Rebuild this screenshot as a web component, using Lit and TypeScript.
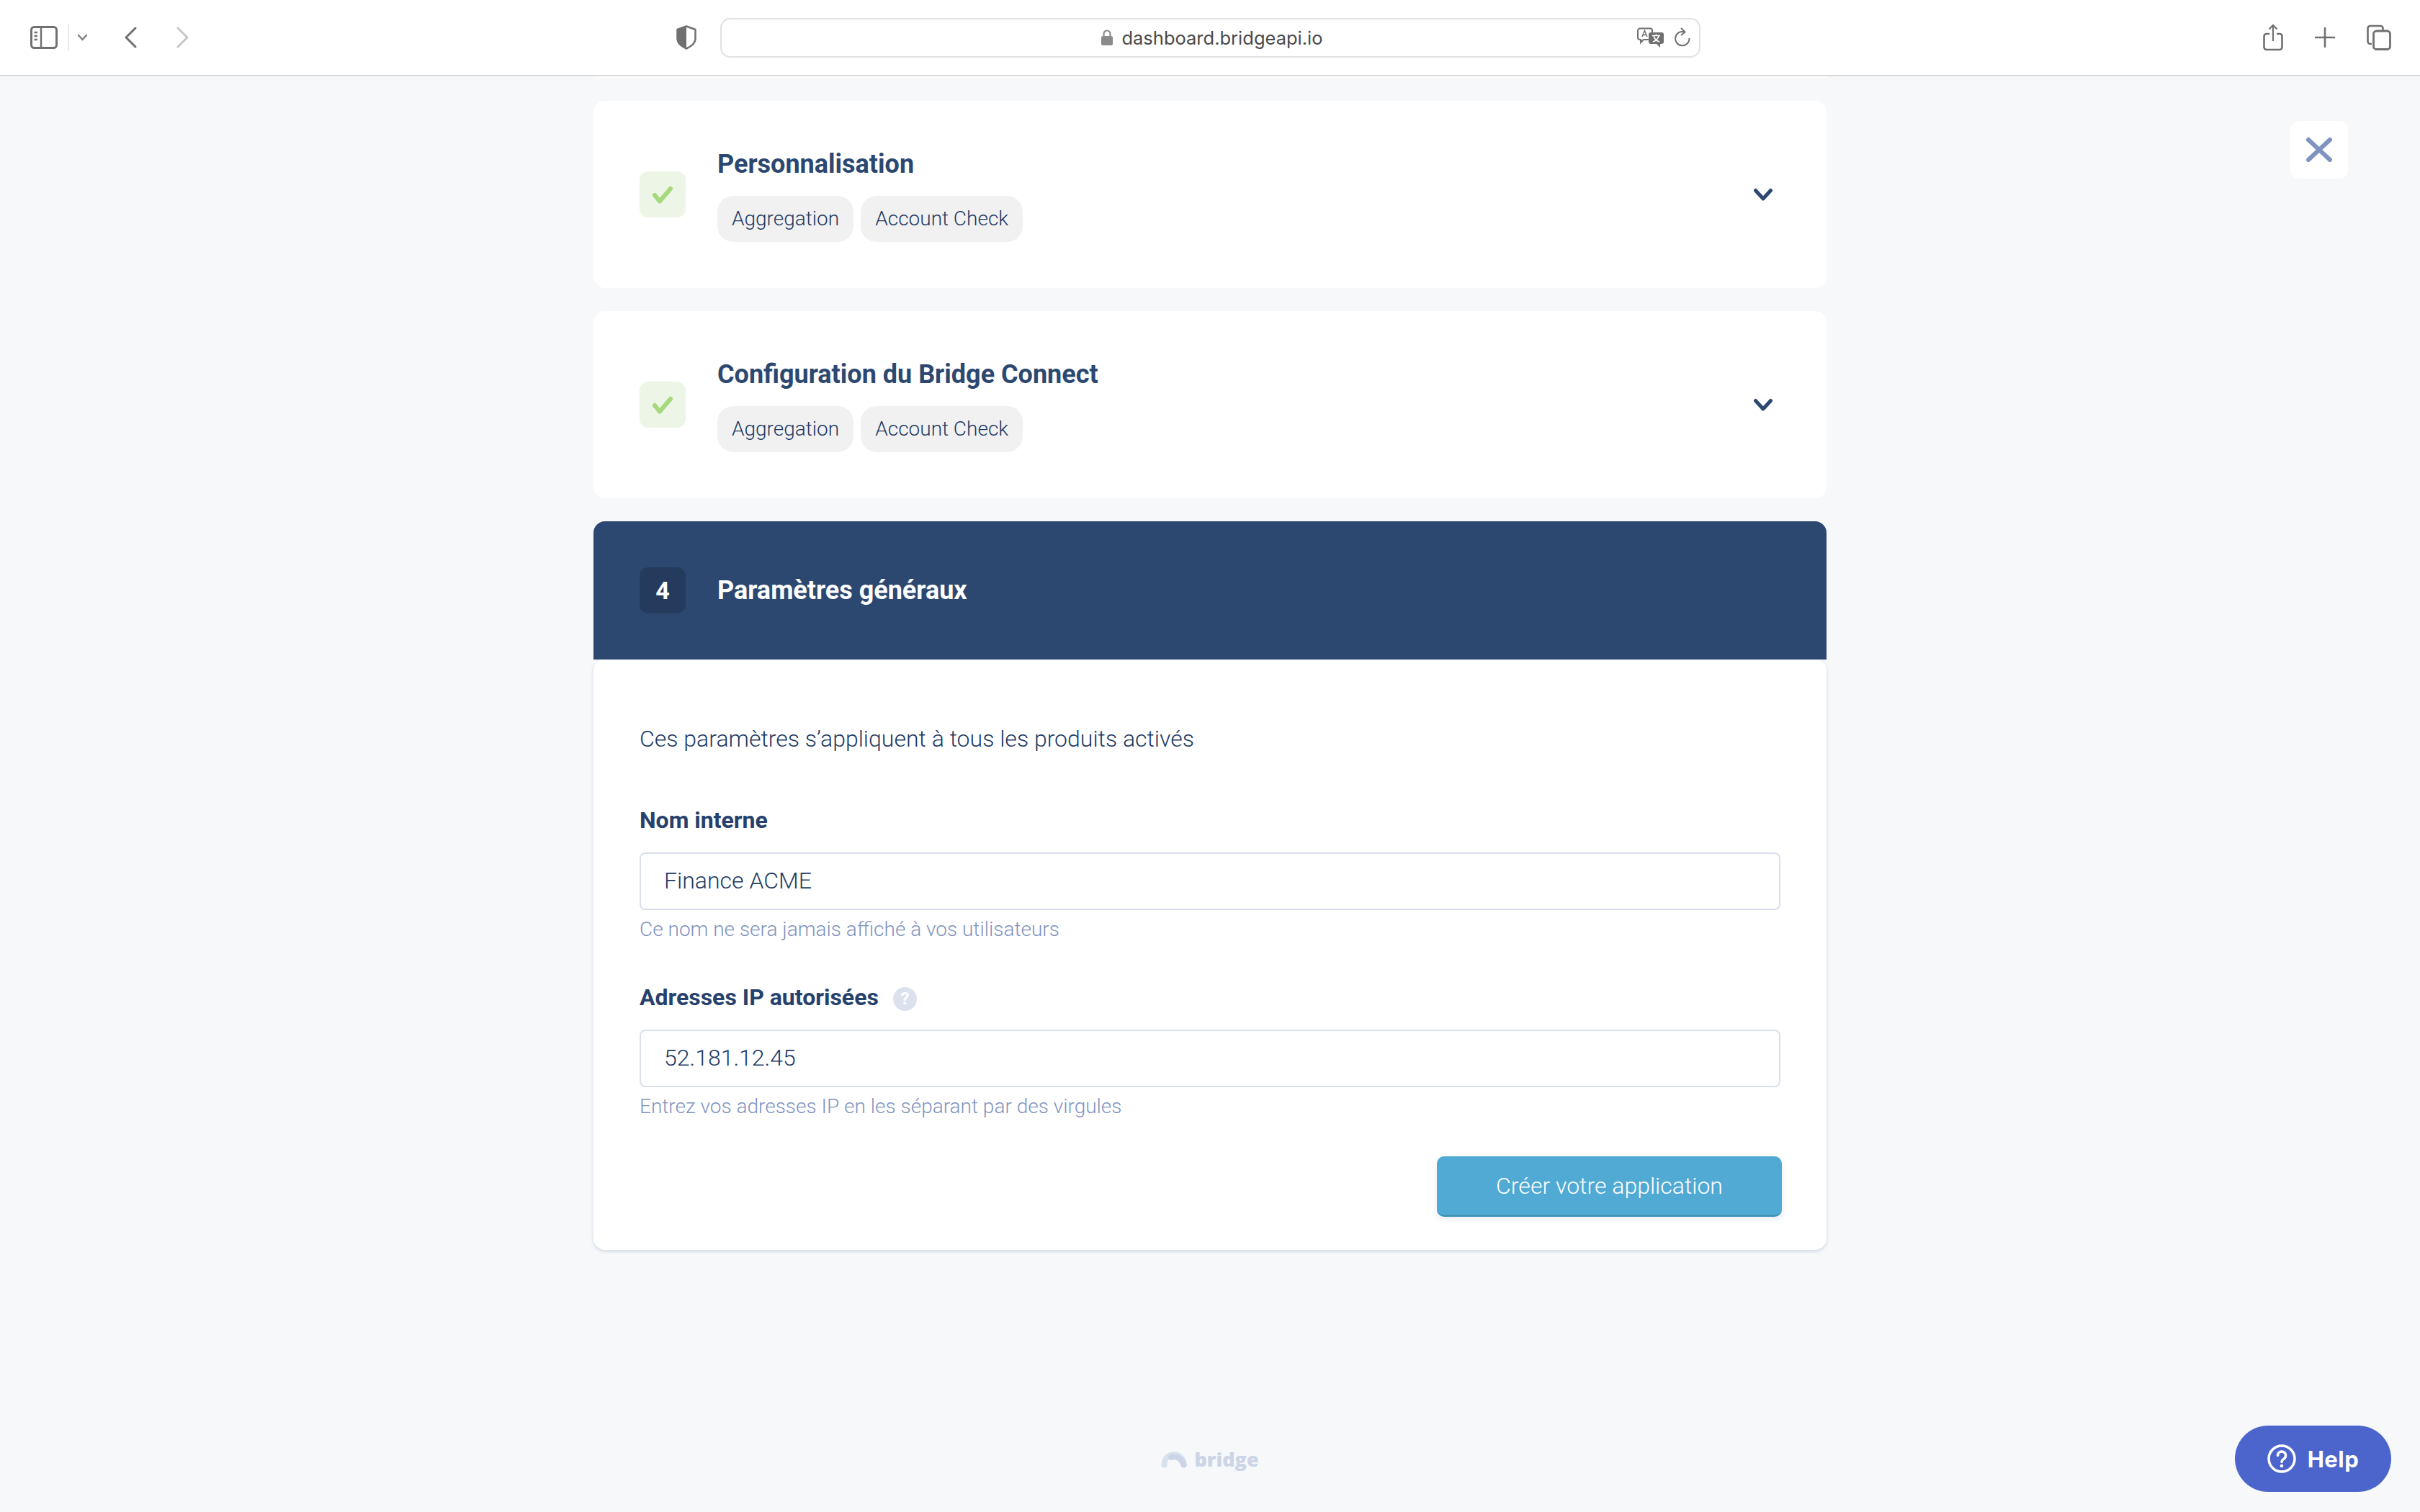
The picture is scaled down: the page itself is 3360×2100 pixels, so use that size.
import { LitElement, html, css } from "lit";
import { customElement } from "lit/decorators.js";

const chevron = html`<svg class="chev" width="28" height="19" viewBox="0 0 28 19"><path d="M3.500 3.500L14 15 24.500 3.500" fill="none" stroke="#2c4870" stroke-width="5" stroke-linecap="round" stroke-linejoin="round"/></svg>`;
const check = html`<svg width="30" height="25" viewBox="0 0 30 25"><path d="M4 13l7 8.500L26 4" fill="none" stroke="#a5d97c" stroke-width="6" stroke-linecap="round" stroke-linejoin="round"/></svg>`;

@customElement("app-root")
export class AppRoot extends LitElement {
  static styles = css`
    :host { display: flex; flex-direction: column; position: relative; width: 3360px; height: 2100px; overflow: hidden; background: #f6f8fa; font-family: Roboto, "Liberation Sans", sans-serif; font-weight: 300; color: #1e3a63; }
    .toolbar { flex: none; display: flex; align-items: center; height: 104px; padding: 0 40px 0 42px; background: #fff; border-bottom: 2px solid #d8d8d8; box-sizing: content-box; }
    .toolbar svg { flex: none; display: block; }
    .divider { width: 2px; height: 37px; background: #ececec; margin: 0 11px 0 14px; }
    .ml-back { margin-left: 50px; }
    .ml-fwd { margin-left: 55px; }
    .ml-shield { margin-left: 676px; }
    .address { width: 1361px; height: 55px; box-sizing: border-box; margin-left: 33px; border: 2px solid #e2e2e2; border-radius: 14px; display: grid; grid-template-columns: 1fr auto 1fr; align-items: center; padding: 0 12px 0 16px; font-family: Inter, sans-serif; font-weight: 400; font-size: 25.500px; color: #4a4a4a; }
    .url { grid-column: 2; display: flex; align-items: center; gap: 11px; }
    .addr-tools { grid-column: 3; justify-self: end; display: flex; align-items: center; gap: 15px; }
    .tb-right { margin-left: auto; display: flex; align-items: center; gap: 44px; }
    .page { flex: 1; display: flex; flex-direction: column; align-items: center; min-height: 0; }
    .stub { width: 1712px; height: 2px; background: #fff; border-radius: 0 0 14px 14px; margin-bottom: 32px; }
    .col { width: 1712px; display: flex; flex-direction: column; gap: 32px; }
    .card { height: 260px; box-sizing: border-box; background: #fff; border-radius: 16px; padding: 64px 74px 64px 64px; display: flex; align-items: center; }
    .box { flex: none; width: 64px; height: 64px; border-radius: 12px; display: flex; align-items: center; justify-content: center; margin-right: 44px; }
    .box.done { background: #edf6e6; }
    .box.num { background: #243b5e; color: #fff; font-weight: 700; font-size: 34px; }
    .info { flex: 1; }
    .title { font-size: 36px; line-height: 48px; font-weight: 700; color: #2c4870; margin-bottom: 20px; }
    .tags { display: flex; gap: 10px; }
    .tag { height: 64px; padding: 0 20px; border-radius: 22px; background: #f1f1f2; font-size: 28px; line-height: 64px; }
    .panel { border-radius: 16px; }
    .panel-head { height: 192px; box-sizing: border-box; padding: 0 64px; background: #2c4870; border-radius: 16px 16px 0 0; display: flex; align-items: center; color: #fff; }
    .panel-title { font-size: 36px; font-weight: 700; }
    .panel-body { background: #fff; border-radius: 14px 14px 16px 16px; box-shadow: 0 2px 4px rgba(120, 140, 180, 0.3); padding: 88px 64px 46px; display: flex; flex-direction: column; }
    .intro { font-size: 32px; line-height: 44px; }
    .label { display: flex; align-items: center; gap: 20px; font-size: 32px; line-height: 44px; font-weight: 700; margin-bottom: 23px; color: #26416b; }
    .l1 { margin-top: 69px; }
    .l2 { margin-top: 55px; }
    .hintdot { width: 33px; height: 33px; border-radius: 50%; background: #dbe2ee; color: #fff; font-size: 24px; font-weight: 700; line-height: 33px; text-align: center; margin-top: 4px; }
    .input { height: 80px; box-sizing: border-box; border: 2px solid #d9e0ec; border-radius: 8px; padding: 0 32px; font-size: 32px; line-height: 74px; }
    .hint { margin-top: 9px; margin-bottom: -1px; font-size: 28px; line-height: 36px; color: #7f93bf; }
    .submit { align-self: flex-end; margin: 52px -2px 0 0; width: 479px; height: 84px; box-sizing: border-box; border: none; border-bottom: 3px solid #4393b9; border-radius: 10px; background: #50aad3; color: #fff; font: 300 32px Roboto, sans-serif; box-shadow: 0 4px 10px rgba(80, 110, 150, 0.12); }
    .footer { margin-top: auto; margin-bottom: 53px; display: flex; align-items: center; gap: 10px; font-family: "Open Sans", sans-serif; font-weight: 800; font-size: 27px; line-height: 40px; color: #cbd5e6; }
    .close { position: absolute; left: 3180px; top: 168px; width: 80px; height: 80px; border-radius: 12px; background: #fff; display: flex; align-items: center; justify-content: center; }
    .help { position: absolute; left: 3103px; top: 1980px; width: 217px; height: 92px; border-radius: 46px; background: #4b65cc; color: #fff; display: flex; align-items: center; justify-content: center; gap: 16px; font-family: Inter, sans-serif; font-weight: 700; font-size: 31px; letter-spacing: 0.5px; }
  `;

  private row(name: string) {
    return html`<section class="card">
      <div class="box done">${check}</div>
      <div class="info">
        <div class="title">${name}</div>
        <div class="tags"><span class="tag">Aggregation</span><span class="tag">Account Check</span></div>
      </div>
      ${chevron}
    </section>`;
  }

  render() {
    const g = "#707070";
    return html`
      <header class="toolbar">
        <svg width="38" height="32" viewBox="0 0 38 32"><rect x="1.500" y="1.500" width="35" height="29" rx="4" fill="none" stroke="${g}" stroke-width="3"/><path d="M15 2v28" stroke="${g}" stroke-width="2.500"/><path d="M5.500 9h4.500M5.500 14h4.500M5.500 19h4.500" stroke="${g}" stroke-width="2.500"/></svg>
        <span class="divider"></span>
        <svg width="15" height="10" viewBox="0 0 15 10"><path d="M2 2l5.500 6L13 2" fill="none" stroke="#808080" stroke-width="2.500" stroke-linecap="round"/></svg>
        <svg class="ml-back" width="18" height="30" viewBox="0 0 18 30"><path d="M16 2L3 15l13 13" fill="none" stroke="${g}" stroke-width="3" stroke-linecap="round" stroke-linejoin="round"/></svg>
        <svg class="ml-fwd" width="18" height="30" viewBox="0 0 18 30"><path d="M2 2l13 13L2 28" fill="none" stroke="#c6c6c6" stroke-width="3" stroke-linecap="round" stroke-linejoin="round"/></svg>
        <svg class="ml-shield" width="28" height="34" viewBox="0 0 28 34"><path d="M14 1.500L26.500 6v13c0 6-6 10.500-12.500 13.500C7.500 29.500 1.500 25 1.500 19V6z" fill="none" stroke="${g}" stroke-width="2.500" stroke-linejoin="round"/><path d="M14 1.500V32.500C7.500 29.500 1.500 25 1.500 19V6z" fill="${g}"/></svg>
        <div class="address">
          <div class="url">
            <svg width="18" height="24" viewBox="0 0 18 24"><rect x="1" y="10" width="16" height="13" rx="2.500" fill="#8a8a8a"/><path d="M4.500 10V7a4.500 4.500 0 0 1 9 0v3" fill="none" stroke="#8a8a8a" stroke-width="2.200"/></svg>
            <span>dashboard.bridgeapi.io</span>
          </div>
          <div class="addr-tools">
            <svg width="37" height="28" viewBox="0 0 37 28"><path d="M4 1.500h14a3 3 0 0 1 3 3V14a3 3 0 0 1-3 3H9l-4 4v-4H4a3 3 0 0 1-3-3V4.500a3 3 0 0 1 3-3z" fill="#fff" stroke="${g}" stroke-width="2"/><path d="M7 13l3.500-8.500L14 13M8.200 10.500h4.600" fill="none" stroke="${g}" stroke-width="1.500"/><path d="M19 7h15a3 3 0 0 1 3 3v10a3 3 0 0 1-3 3h-2v5l-5-5h-8a3 3 0 0 1-3-3V10a3 3 0 0 1 3-3z" fill="${g}"/><path d="M21 11.500h11M26.500 9.500v2M23 12c1 4 5 7 8 8M30 12c-1 4-5 7-8 8" fill="none" stroke="#fff" stroke-width="1.600"/></svg>
            <svg width="22" height="28" viewBox="0 0 22 28"><path d="M14 6.500A9.700 9.700 0 1 0 20.500 15" fill="none" stroke="${g}" stroke-width="2"/><path d="M9 1l5.500 5.500L9 11" fill="none" stroke="${g}" stroke-width="2"/></svg>
          </div>
        </div>
        <div class="tb-right">
          <svg width="28" height="38" viewBox="0 0 28 38"><path d="M9 14H5a3.500 3.500 0 0 0-3.500 3.500v15A3.500 3.500 0 0 0 5 36h18a3.500 3.500 0 0 0 3.500-3.500v-15A3.500 3.500 0 0 0 23 14h-4" fill="none" stroke="${g}" stroke-width="2.600"/><path d="M14 24V2M8.500 7.500L14 2l5.500 5.500" fill="none" stroke="${g}" stroke-width="2.200"/></svg>
          <svg width="28" height="28" viewBox="0 0 28 28"><path d="M14 1v26M1 14h26" stroke="${g}" stroke-width="2.600" stroke-linecap="round"/></svg>
          <svg width="34" height="36" viewBox="0 0 34 36"><path d="M7 27H5a3.500 3.500 0 0 1-3.500-3.500v-18A3.500 3.500 0 0 1 5 2h14a3.500 3.500 0 0 1 3.500 3.500V8" fill="none" stroke="${g}" stroke-width="2.600"/><rect x="9.500" y="9" width="23" height="25.500" rx="4" fill="#fff" stroke="${g}" stroke-width="2.800"/></svg>
        </div>
      </header>
      <main class="page">
        <div class="stub"></div>
        <div class="col">
          ${this.row("Personnalisation")}
          ${this.row("Configuration du Bridge Connect")}
          <section class="panel">
            <div class="panel-head">
              <div class="box num">4</div>
              <div class="panel-title">Paramètres généraux</div>
            </div>
            <div class="panel-body">
              <div class="intro">Ces paramètres s’appliquent à tous les produits activés</div>
              <div class="label l1">Nom interne</div>
              <div class="input">Finance ACME</div>
              <div class="hint">Ce nom ne sera jamais affiché à vos utilisateurs</div>
              <div class="label l2">Adresses IP autorisées <span class="hintdot">?</span></div>
              <div class="input">52.181.12.45</div>
              <div class="hint">Entrez vos adresses IP en les séparant par des virgules</div>
              <button class="submit">Créer votre application</button>
            </div>
          </section>
        </div>
        <footer class="footer">
          <svg width="36" height="23" viewBox="0 0 36 23"><path d="M4.500 18.500C4.500 10 10 4.500 18 4.500s13.500 5.500 13.500 14" fill="none" stroke="#d9e1ed" stroke-width="8" stroke-linecap="round"/><path d="M14 8c8-2.500 15 2.500 17.500 10.500" fill="none" stroke="#cbd5e6" stroke-width="8" stroke-linecap="round"/></svg>
          <span>bridge</span>
        </footer>
      </main>
      <div class="close"><svg width="36" height="34" viewBox="0 0 36 34"><path d="M3 3l30 28M33 3L3 31" fill="none" stroke="#7f93bf" stroke-width="6" stroke-linecap="round"/></svg></div>
      <div class="help">
        <svg width="40" height="40" viewBox="0 0 40 40"><circle cx="20" cy="20" r="18" fill="none" stroke="#fff" stroke-width="3.500"/><path d="M14.500 15.500a5.500 5.500 0 1 1 8.500 4.600c-2 1.300-3 2.300-3 4.400" fill="none" stroke="#fff" stroke-width="3.500" stroke-linecap="round"/><circle cx="20" cy="30" r="2.300" fill="#fff"/></svg>
        <span>Help</span>
      </div>
    `;
  }
}
